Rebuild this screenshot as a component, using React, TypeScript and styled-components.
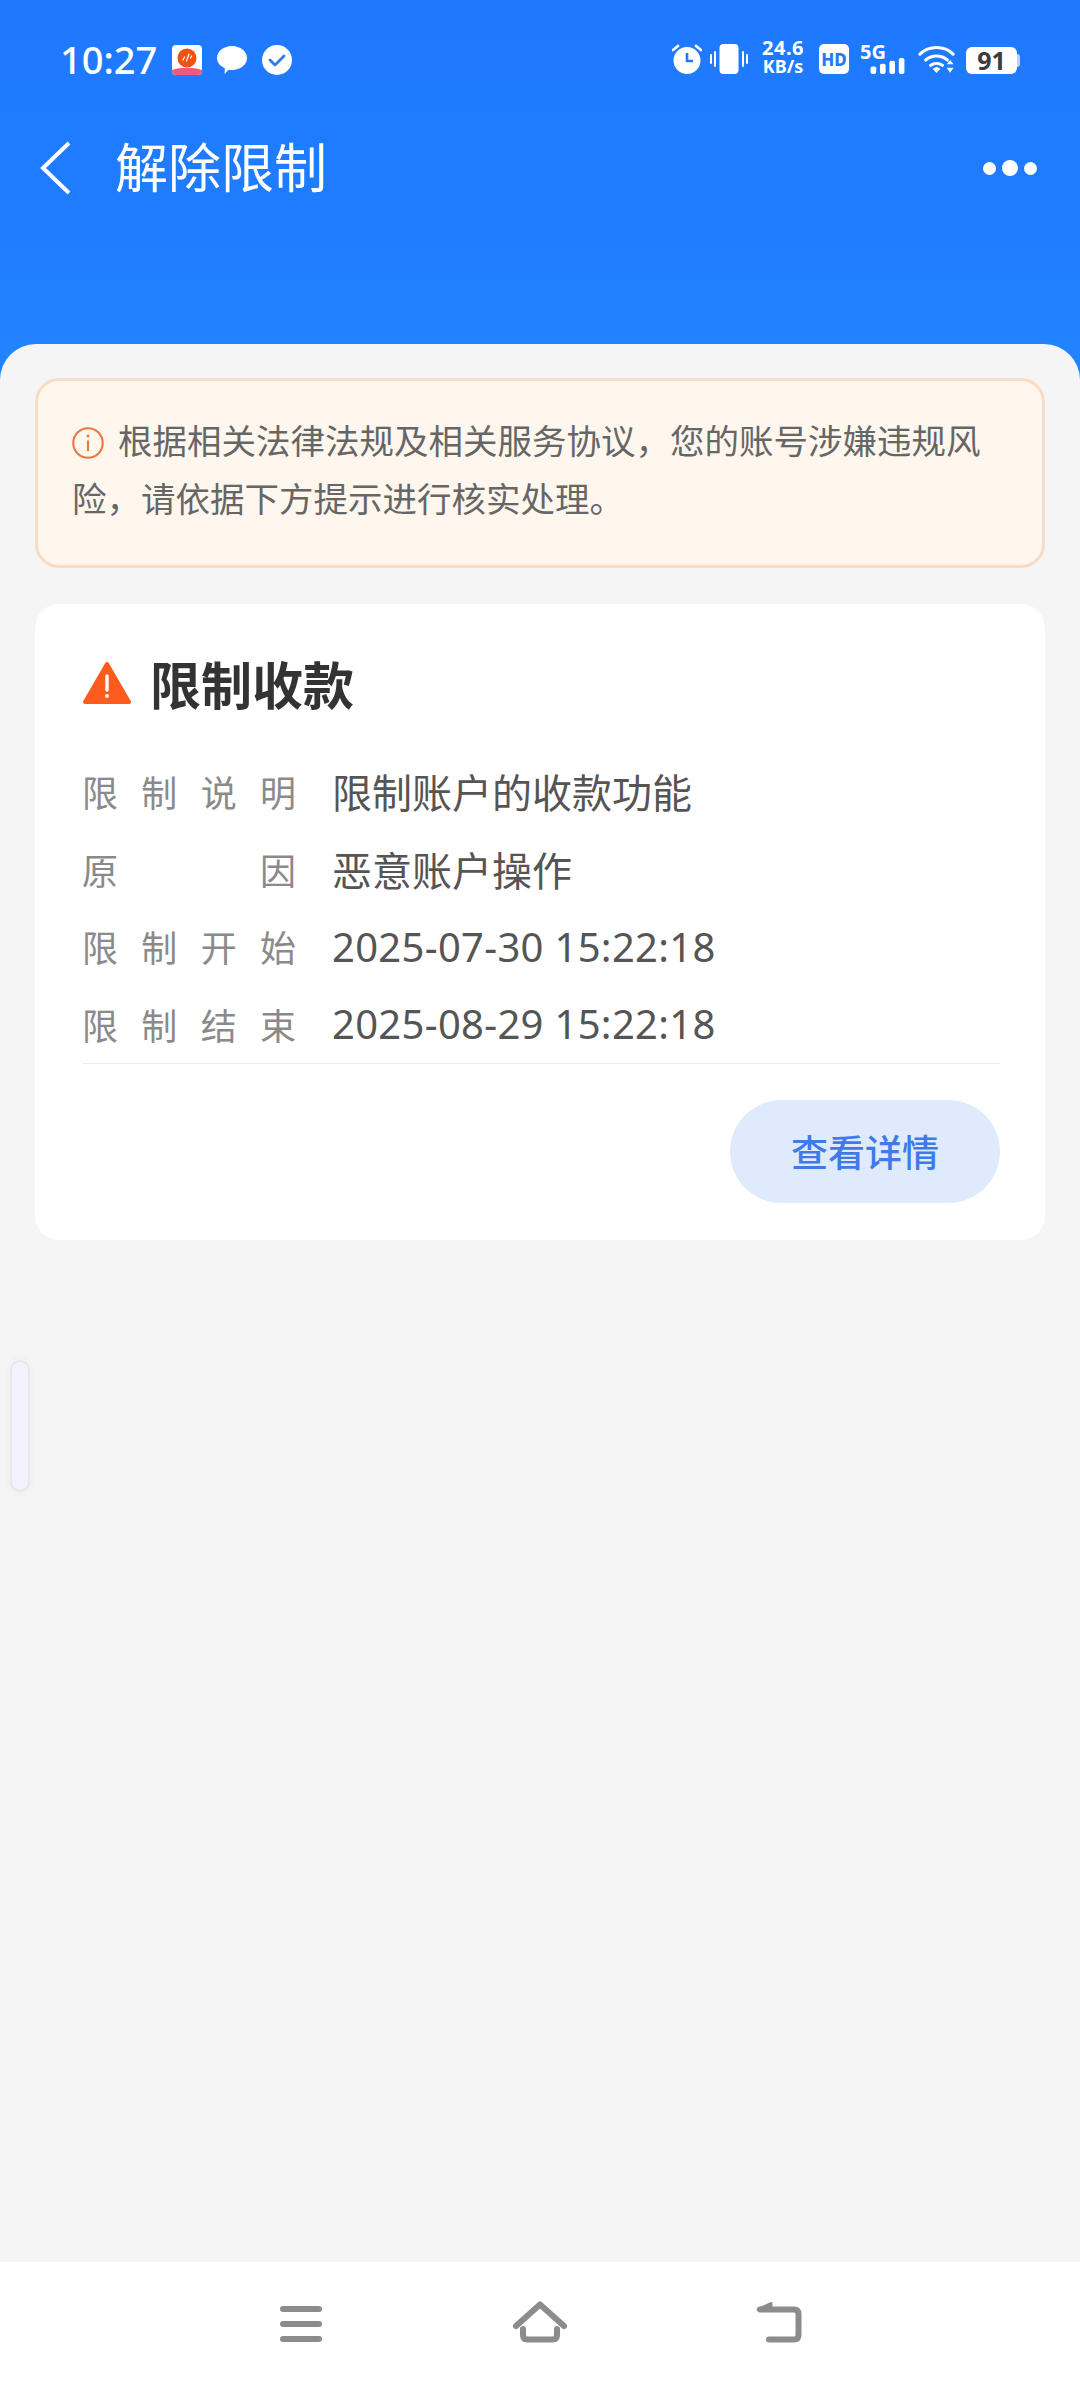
import React from "react";
import styled, { createGlobalStyle } from "styled-components";

const CJK = `"Noto Sans CJK SC", "Noto Sans", sans-serif`;
const DIGITS = `"Noto Sans", "Noto Sans CJK SC", sans-serif`;

const GlobalStyle = createGlobalStyle`
  html, body {
    margin: 0;
    padding: 0;
    background: #f5f5f5;
  }
  * {
    box-sizing: border-box;
  }
`;

const rows = [
  { label: ["限", "制", "说", "明"], value: "限制账户的收款功能", isDate: false },
  { label: ["原", "因"], value: "恶意账户操作", isDate: false },
  { label: ["限", "制", "开", "始"], value: "2025-07-30 15:22:18", isDate: true },
  { label: ["限", "制", "结", "束"], value: "2025-08-29 15:22:18", isDate: true },
];

const App: React.FC = () => {
  return (
    <Screen>
      <GlobalStyle />
      <Header>
        <StatusBar>
          <StatusLeft>
            <Time>10:27</Time>
            <AppBadge viewBox="0 0 30 30">
              <rect width="30" height="30" rx="4" fill="#fff" />
              <circle cx="15" cy="13" r="9.500" fill="#f0530f" />
              <path d="M11 15l1.500-3M14.500 16l2.500-7M18.500 13l1-2" stroke="#fff" strokeWidth="1.200" strokeLinecap="round" />
              <path d="M0 25c8-3 22-3 30 0v1a4 4 0 0 1-4 4H4a4 4 0 0 1-4-4z" fill="#ee5a7e" />
            </AppBadge>
            <StatusGlyph viewBox="0 0 30 30">
              <path d="M15 1c8.300 0 15 5.200 15 12s-6.700 12-15 12c-1.200 0-2.300-.1-3.400-.3L7.500 29l.4-5.800C3 21 0 17.300 0 13 0 6.200 6.700 1 15 1z" fill="#fff" />
            </StatusGlyph>
            <StatusGlyph viewBox="0 0 30 30">
              <circle cx="15" cy="15" r="15" fill="#fff" />
              <path d="M8 15l5 5 9-9" fill="none" stroke="#2f7bea" strokeWidth="2.800" strokeLinecap="round" strokeLinejoin="round" />
            </StatusGlyph>
          </StatusLeft>
          <StatusRight>
            <StatusGlyph viewBox="0 0 30 30">
              <circle cx="15" cy="16.500" r="13.500" fill="#fff" />
              <path d="M15 9v8h6" fill="none" stroke="#1f7bff" strokeWidth="2.600" />
              <path d="M1 6l5-4M29 6l-5-4" stroke="#fff" strokeWidth="2.800" strokeLinecap="round" />
            </StatusGlyph>
            <VibrateGlyph viewBox="0 0 38 30">
              <rect x="9.500" y="0" width="19" height="30" rx="4" fill="#fff" />
              <path d="M5 8v14M1 11v8M33 8v14M37 11v8" stroke="#fff" strokeWidth="2" strokeLinecap="round" />
            </VibrateGlyph>
            <Speed>
              <SpeedValue>24.6</SpeedValue>
              <SpeedUnit>KB/s</SpeedUnit>
            </Speed>
            <HdBadge>HD</HdBadge>
            <SignalBlock>
              <SignalLabel>5G</SignalLabel>
              <SignalBars viewBox="0 0 36 17">
                <rect x="0" y="9" width="6" height="8" rx="2" fill="#fff" />
                <rect x="10" y="6" width="6" height="11" rx="2" fill="#fff" />
                <rect x="20" y="3" width="6" height="14" rx="2" fill="#fff" />
                <rect x="30" y="0" width="6" height="17" rx="2" fill="#fff" />
              </SignalBars>
            </SignalBlock>
            <WifiGlyph viewBox="0 0 38 30">
              <path d="M2 10C11 1 27 1 36 10M8 16c6-5.500 16-5.500 22 0M13 21.500c3.500-2.500 8.500-2.500 12 0" fill="none" stroke="#fff" strokeWidth="3.200" strokeLinecap="round" />
              <path d="M15 25l4-2 4 2-4 4.500z" fill="#fff" />
              <path d="M33 16l3.500 4.500h-7zM33 29l-3.500-5h7z" fill="#fff" />
            </WifiGlyph>
            <Battery>
              <BatteryBody>91</BatteryBody>
              <BatteryTip />
            </Battery>
          </StatusRight>
        </StatusBar>
        <TitleBar>
          <BackIcon viewBox="0 0 32 54">
            <path d="M29 2L3 27l26 25" fill="none" stroke="#fff" strokeWidth="4" />
          </BackIcon>
          <PageTitle>解除限制</PageTitle>
          <MoreDots>
            <Dot $size={13} />
            <Dot $size={16} />
            <Dot $size={13} />
          </MoreDots>
        </TitleBar>
      </Header>

      <Panel>
        <Notice>
          <NoticeIcon viewBox="0 0 30 30">
            <circle cx="15" cy="15" r="13.800" fill="none" stroke="#e8793f" strokeWidth="2" />
            <path d="M15 12.500v10" stroke="#e8793f" strokeWidth="2" />
            <circle cx="15" cy="8.500" r="1.400" fill="#e8793f" />
          </NoticeIcon>
          根据相关法律法规及相关服务协议，您的账号涉嫌违规风险，请依据下方提示进行核实处理。
        </Notice>

        <Card>
          <CardTitle>
            <WarnIcon viewBox="0 0 48 44">
              <path d="M24 3L46 41H2z" fill="#fb5c1c" stroke="#fb5c1c" strokeWidth="4" strokeLinejoin="round" />
              <path d="M24 15v14" stroke="#fff" strokeWidth="3.400" strokeLinecap="round" />
              <circle cx="24" cy="35" r="2" fill="#fff" />
            </WarnIcon>
            限制收款
          </CardTitle>
          <InfoList>
            {rows.map((row) => (
              <InfoRow key={row.value}>
                <InfoLabel>
                  {row.label.map((ch) => (
                    <span key={ch}>{ch}</span>
                  ))}
                </InfoLabel>
                <InfoValue $isDate={row.isDate}>{row.value}</InfoValue>
              </InfoRow>
            ))}
          </InfoList>
          <Divider />
          <CardActions>
            <DetailButton>查看详情</DetailButton>
          </CardActions>
        </Card>

        <EdgeHandle />
      </Panel>

      <NavBar>
        <NavIcon viewBox="0 0 60 50">
          <path d="M13 8h36M13 23h36M13 38h36" stroke="#8c8c8c" strokeWidth="6" strokeLinecap="round" />
        </NavIcon>
        <NavIcon viewBox="0 0 60 50">
          <path d="M6 25L30 3.500 54 25" fill="none" stroke="#8c8c8c" strokeWidth="6" strokeLinecap="round" strokeLinejoin="round" />
          <path d="M13 28v6c0 3 1.500 4.500 4.500 4.500h25c3 0 4.500-1.500 4.500-4.500v-6" fill="none" stroke="#8c8c8c" strokeWidth="6" strokeLinecap="round" />
        </NavIcon>
        <NavIcon viewBox="0 0 60 50">
          <path d="M19 38.500h25c3 0 4.500-1.500 4.500-4.500V13c0-3-1.500-4.500-4.500-4.500H10" fill="none" stroke="#8c8c8c" strokeWidth="6" strokeLinecap="round" />
          <path d="M8 8.500L21 2.500v7z" fill="#8c8c8c" stroke="#8c8c8c" strokeWidth="3" strokeLinejoin="round" />
        </NavIcon>
      </NavBar>
    </Screen>
  );
};

const Screen = styled.div`
  width: 1080px;
  height: 2388px;
  display: flex;
  flex-direction: column;
  overflow: hidden;
  background: linear-gradient(180deg, #1e79ff 0%, #1f7cff 220px, #2183ff 344px, #2183ff 420px);
  font-family: ${CJK};
`;

const Header = styled.header`
  height: 344px;
  flex: none;
  display: flex;
  flex-direction: column;
`;

const StatusBar = styled.div`
  height: 116px;
  padding: 41px 60px 0 60px;
  display: flex;
  justify-content: space-between;
  align-items: flex-start;
`;

const StatusLeft = styled.div`
  display: flex;
  align-items: center;
  gap: 15px;
  margin-top: 4px;
`;

const Time = styled.span`
  font-family: ${DIGITS};
  font-size: 38px;
  font-weight: 500;
  line-height: 30px;
  color: #fff;
  width: 97px;
  margin-top: -3px;
`;

const AppBadge = styled.svg`
  width: 30px;
  height: 30px;
  display: block;
`;

const StatusGlyph = styled.svg`
  width: 30px;
  height: 30px;
  display: block;
`;

const StatusRight = styled.div`
  display: flex;
  align-items: flex-end;
  height: 33px;
  gap: 11px;
`;

const VibrateGlyph = styled.svg`
  width: 38px;
  height: 30px;
  display: block;
  margin-left: -3px;
`;

const Speed = styled.div`
  width: 46px;
  margin-left: 1px;
  display: flex;
  flex-direction: column;
  align-items: center;
  font-family: ${DIGITS};
  color: #fff;
  font-weight: 700;
  margin-bottom: -1px;
`;

const SpeedValue = styled.span`
  font-size: 20px;
  line-height: 18px;
  letter-spacing: 0.5px;
`;

const SpeedUnit = styled.span`
  font-size: 18px;
  line-height: 18px;
`;

const HdBadge = styled.div`
  width: 30px;
  height: 30px;
  border-radius: 5px;
  background: #fff;
  color: #1f7bff;
  font-family: ${DIGITS};
  font-size: 17px;
  font-weight: 800;
  display: flex;
  align-items: center;
  justify-content: center;
  margin-left: 2px;
`;

const SignalBlock = styled.div`
  width: 45px;
  height: 30px;
  position: relative;
  display: flex;
  justify-content: flex-end;
  align-items: flex-end;
`;

const SignalLabel = styled.span`
  position: absolute;
  left: 0;
  top: -1px;
  font-family: ${DIGITS};
  font-size: 20px;
  line-height: 18px;
  font-weight: 700;
  color: #fff;
`;

const SignalBars = styled.svg`
  width: 35px;
  height: 16px;
  display: block;
`;

const WifiGlyph = styled.svg`
  width: 37px;
  height: 30px;
  display: block;
  margin-left: 2px;
`;

const Battery = styled.div`
  display: flex;
  align-items: center;
  height: 27px;
`;

const BatteryBody = styled.div`
  width: 51px;
  height: 27px;
  border-radius: 6px;
  background: #fff;
  color: #3c3c3c;
  font-family: ${DIGITS};
  font-size: 25px;
  font-weight: 700;
  line-height: 27px;
  text-align: center;
`;

const BatteryTip = styled.div`
  width: 3px;
  height: 13px;
  border-radius: 0 3px 3px 0;
  background: #bcd6fb;
`;

const TitleBar = styled.div`
  height: 104px;
  padding: 0 43px 0 40px;
  display: flex;
  align-items: center;
  position: relative;
`;

const BackIcon = styled.svg`
  width: 32px;
  height: 54px;
  display: block;
  flex: none;
`;

const PageTitle = styled.h1`
  margin: 0 0 6px 43px;
  flex: 1;
  font-size: 53px;
  font-weight: 400;
  color: #fff;
  line-height: 60px;
`;

const MoreDots = styled.div`
  display: flex;
  align-items: center;
  gap: 6px;
`;

const Dot = styled.i<{ $size: number }>`
  display: block;
  width: ${({ $size }) => $size}px;
  height: ${({ $size }) => $size}px;
  border-radius: 50%;
  background: #fff;
`;

const Panel = styled.main`
  flex: 1;
  position: relative;
  background: #f5f5f5;
  border-radius: 36px 36px 0 0;
  padding: 34px 35px 0;
  display: flex;
  flex-direction: column;
  gap: 36px;
`;

const Notice = styled.div`
  height: 190px;
  padding: 29px 30px 0 34px;
  background: #fff7ee;
  border: 3px solid #f9dcc5;
  border-radius: 24px;
  font-size: 34.500px;
  line-height: 58px;
  color: #666;
`;

const NoticeIcon = styled.svg`
  width: 32px;
  height: 32px;
  display: inline-block;
  vertical-align: -5px;
  margin: 0 14px 0 0;
`;

const Card = styled.section`
  height: 636px;
  background: #fff;
  border-radius: 24px;
  padding: 51px 45px 0 47px;
  display: flex;
  flex-direction: column;
`;

const CardTitle = styled.h2`
  margin: 0;
  display: flex;
  align-items: center;
  gap: 19px;
  font-size: 51px;
  line-height: 56px;
  font-weight: 700;
  color: #333;
`;

const WarnIcon = styled.svg`
  width: 48px;
  height: 44px;
  display: block;
  flex: none;
  margin-left: 1px;
`;

const InfoList = styled.div`
  margin-top: 41px;
  display: flex;
  flex-direction: column;
`;

const InfoRow = styled.div`
  height: 77.700px;
  display: flex;
  align-items: center;
`;

const InfoLabel = styled.div`
  width: 214px;
  margin-right: 36px;
  display: flex;
  justify-content: space-between;
  font-size: 36px;
  color: #8a8a8a;
  letter-spacing: 0;
`;

const InfoValue = styled.div<{ $isDate: boolean }>`
  font-family: ${DIGITS};
  font-size: 40px;
  color: #555;
  letter-spacing: ${({ $isDate }) => ($isDate ? "0.3px" : "0")};
`;

const Divider = styled.hr`
  margin: 0;
  border: 0;
  height: 1px;
  background: #eeeeee;
`;

const CardActions = styled.div`
  margin-top: 36px;
  display: flex;
  justify-content: flex-end;
`;

const DetailButton = styled.button`
  width: 270px;
  height: 103px;
  border: 0;
  border-radius: 52px;
  background: #dfebfd;
  color: #3f7ae8;
  font-family: ${CJK};
  font-size: 37px;
  font-weight: 500;
  padding: 0;
`;

const EdgeHandle = styled.div`
  position: absolute;
  left: 10px;
  top: 1016px;
  width: 20px;
  height: 132px;
  border-radius: 10px;
  background: #f1f2fb;
  border: 2px solid #e6e6ea;
  box-shadow: 0 0 0 4px #f2f2f3;
`;

const NavBar = styled.nav`
  height: 126px;
  flex: none;
  background: #fff;
  padding: 39px 0 0 270px;
  display: flex;
  align-items: flex-start;
  gap: 180px;
`;

const NavIcon = styled.svg`
  width: 60px;
  height: 50px;
  display: block;
`;

export default App;
